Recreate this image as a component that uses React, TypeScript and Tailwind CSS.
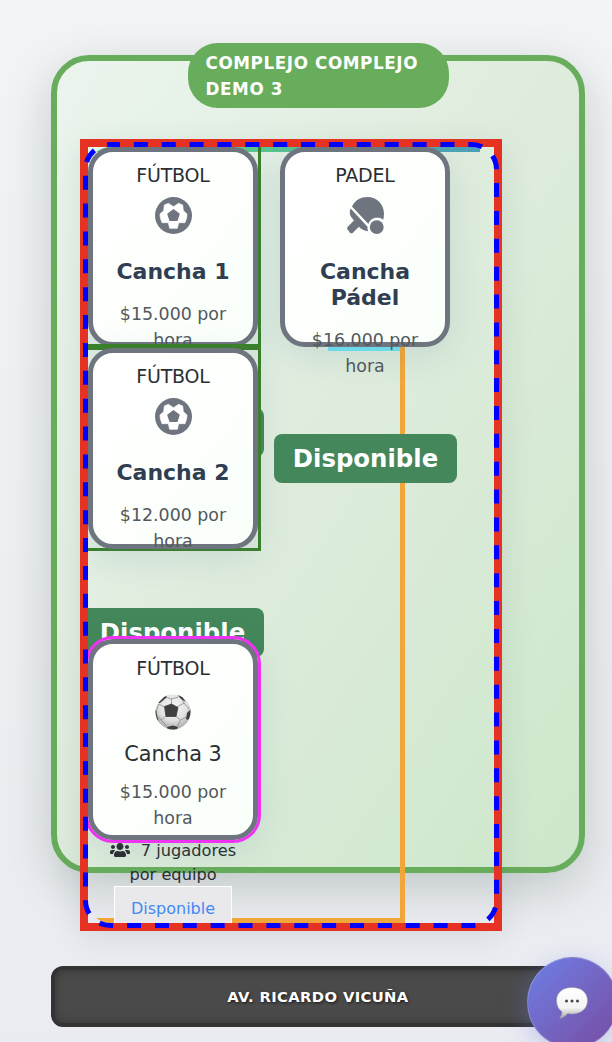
import React from "react";
import { FaUsers } from "react-icons/fa";

const cardClass =
  "relative box-border flex w-[170px] shrink-0 flex-col items-center rounded-[25px] border-[5px] border-[#6f757e] bg-gradient-to-br from-white to-[#fafffa] text-center shadow-[0_8px_34px_rgba(70,120,150,0.16)]";

function Badge({ className }: { className: string }) {
  return (
    <span
      className={`absolute flex h-[49px] w-[183px] items-center justify-center rounded-lg bg-[#43875a] pt-0.5 text-[24.4px] font-bold text-white ${className}`}
    >
      Disponible
    </span>
  );
}

interface CourtProps {
  sport: string;
  icon: React.ReactNode;
  name: string;
  price: string;
  className: string;
}

function Court({ sport, icon, name, price, className }: CourtProps) {
  return (
    <article className={`${cardClass} ${className}`}>
      <p className="mt-[10px] text-[19px] leading-[26px] tracking-[-0.2px] text-[#2b2e32]">{sport}</p>
      <div className="mt-[9px] h-[37px] text-[#6f757e]">{icon}</div>
      <h3 className="mt-[25px] w-[140px] text-[22px] font-bold leading-[26px] text-[#2f3e50]">{name}</h3>
      <p className="mt-4 w-[120px] text-[17.4px] leading-[26px] text-[#53585d]">{price}</p>
    </article>
  );
}

function FutbolIcon() {
  return (
    <svg viewBox="0 0 111 111" className="h-[37px] w-[37px]">
      <circle cx="55.5" cy="55.5" r="55.5" fill="currentColor" />
      <path
        d="M28 24L40 19L55.500 29L71 19L83 24L85 41L96 51L95 62L90 77L71 77L67 94L44 94L40 77L21 77L16 62L15 51L26 41z"
        fill="#fff"
        stroke="#fff"
        strokeWidth="2"
        strokeLinejoin="round"
      />
      <path d="M55.500 36L74.500 50L67.500 72H43.500L36.500 50z" fill="currentColor" />
    </svg>
  );
}

function PaddleIcon() {
  return (
    <svg viewBox="0 0 112 112" className="h-[37px] w-[37px]" fill="currentColor">
      <path d="M15 29C25 8 42 0 62 0C90 0 112 22 112 50C112 57 111 63 110 69C104 64 98 63 90 63C78 63 68 71 65 82Z" />
      <path d="M11 35C6 47 8 57 17 66L21 71L2 90Q-1 95 2 99L9 108Q13 112 18 108L36 90C43 97 52 103 64 104C62 98 62 95 62 90Z" />
      <circle cx="90" cy="91" r="21" />
    </svg>
  );
}

function SoccerBall() {
  return (
    <svg viewBox="0 0 36 36" className="h-9 w-9">
      <defs>
        <radialGradient id="ball" cx="50%" cy="35%" r="65%">
          <stop offset="0" stopColor="#f6f6f6" />
          <stop offset="0.6" stopColor="#e2e2e2" />
          <stop offset="1" stopColor="#a8a8a8" />
        </radialGradient>
        <clipPath id="ballClip">
          <circle cx="18" cy="18" r="17.5" />
        </clipPath>
      </defs>
      <circle cx="18" cy="18" r="17.5" fill="url(#ball)" />
      <g clipPath="url(#ballClip)">
        <path
          d="M16.500 10V5M22 13l7-4M20.500 22l5 4M11 22l-5 4M9 13L4 10M16.500 5l-7-2M16.500 5l7-2M29 9l-3-6M29 9l5 6M25.500 26l6-3M25.500 26l-3 6M6 26l-4-5M6 26l6 6M4 10L1 17"
          stroke="#8b8b8b"
          strokeWidth="0.8"
          fill="none"
        />
        <path d="M9.500 12.500l7-2.500 6.500 3.500-2 9H11z" fill="#404040" stroke="#404040" strokeWidth="0.8" strokeLinejoin="round" />
        <path
          d="M22 0l5 2.500 4 5.500-5-3zM36 15l-4 4-1 6 2 1 4-5zM12 33l6-1.500 5 1.500-2 4h-8zM0 16l1.500 1 .5 5 2 5-4-3zM3 9l6-6 3-2-1 3-6 5z"
          fill="#404040"
        />
      </g>
    </svg>
  );
}

function ChatBubble() {
  return (
    <svg viewBox="0 0 32 32" className="h-8 w-8">
      <defs>
        <linearGradient id="bubble" x1="0" y1="0" x2="0" y2="1">
          <stop offset="0" stopColor="#ffffff" />
          <stop offset="0.65" stopColor="#f4f4f4" />
          <stop offset="1" stopColor="#aaaaaa" />
        </linearGradient>
      </defs>
      <path
        d="M16 .5C24.500.5 31.500 5 31.500 13.500S24.500 27 16 27c-1.500 0-3-.1-4.300-.4C9.500 29 7 31 3.500 31.500 5.300 29.500 6 27.500 6 24.800 2.500 22.300.5 18.500.5 13.500.5 5 7.500.5 16 .5z"
        fill="url(#bubble)"
        stroke="#9a9a9a"
        strokeWidth="0.5"
      />
      <circle cx="10.500" cy="14" r="1.500" fill="#454545" />
      <circle cx="16" cy="14" r="1.500" fill="#454545" />
      <circle cx="21.500" cy="14" r="1.500" fill="#454545" />
    </svg>
  );
}

export default function App() {
  return (
    <div className="relative h-[1042px] w-[612px] overflow-hidden bg-gradient-to-b from-[#f3f4f6] to-[#ebecf1] pl-[51px] pt-[55px] font-['DejaVu_Sans',sans-serif]">
      <section className="relative box-border h-[818px] w-[534px] rounded-[38px] border-[6px] border-[#68ad5c] bg-gradient-to-br from-[#ebf5ee] via-[#deecdc] to-[#cde7cb] pl-[23px] pt-[78px] shadow-[0_15px_50px_rgba(45,80,60,0.24)]">
        <h2 className="absolute left-[130.5px] top-[-18px] flex h-[65px] w-[261px] items-center rounded-[30px] bg-[#68ad5c] pl-[18px] text-[16.8px] font-bold leading-[26px] tracking-[0.6px] text-white">
          COMPLEJO COMPLEJO DEMO 3
        </h2>

        <div className="relative box-border h-[792px] w-[422px] border-8 border-[#e63223] shadow-[0_8px_30px_rgba(50,80,80,0.12)]">
          <div className="relative flex h-[776px] w-[406px] items-start gap-[22px] overflow-hidden rounded-[22px]">
            <div className="absolute left-0 top-0 h-[5px] w-[392px] bg-gradient-to-r from-[#5cc88c] from-40% to-[#4b9fb9]" />
            <div className="absolute left-[240px] top-[200px] h-[3.5px] w-[76px] bg-[#72e4f2]" />
            <div className="absolute -left-2 top-[200px] h-[576px] w-[325px] border-b-[5px] border-r-[5px] border-[#f2a63a]" />

            <div className="relative flex w-[170px] flex-col">
              <Badge className="left-[-7px] top-[261px]" />
              <Badge className="left-[-7px] top-[461px]" />
              <div className="absolute -left-1 -top-1 h-[204px] w-[177px] border-[3px] border-[#3b8128]" />
              <Court sport="FÚTBOL" icon={<FutbolIcon />} name="Cancha 1" price="$15.000 por hora" className="h-[200px]" />
              <div className="absolute -left-1 top-[197px] h-[207px] w-[177px] border-[3px] border-t-[6px] border-[#3b8128]" />
              <Court sport="FÚTBOL" icon={<FutbolIcon />} name="Cancha 2" price="$12.000 por hora" className="mt-px h-[201px]" />
              <article className={`${cardClass} mt-[90px] h-[201px] outline-[3px] outline-[#f032f5]`}>
                <p className="mt-[11px] text-[19px] leading-[26px] tracking-[-0.2px] text-[#2b2e32]">FÚTBOL</p>
                <div className="mt-[13px]">
                  <SoccerBall />
                </div>
                <h3 className="mt-[11px] text-[20.8px] leading-[26px] text-[#2b2e32]">Cancha 3</h3>
                <p className="mt-3 w-[120px] text-[17.4px] leading-[26px] text-[#53585d]">$15.000 por hora</p>
              </article>
              <div className="-mt-px flex flex-col items-center text-center text-[16.2px] leading-6 text-[#2b2e32]">
                <p className="flex items-center gap-[11px]">
                  <FaUsers className="-mt-0.5 text-[20px]" />7 jugadores
                </p>
                <p>por equipo</p>
                <span className="-mt-px flex h-[46px] w-[118px] items-center justify-center border border-white bg-[#e9e9ec] text-base text-[#428af5]">
                  Disponible
                </span>
              </div>
            </div>

            <div className="relative w-[170px]">
              <Badge className="left-[-6px] top-[287px]" />
              <Court sport="PADEL" icon={<PaddleIcon />} name="Cancha Pádel" price="$16.000 por hora" className="h-[200px]" />
            </div>
          </div>
          <svg viewBox="0 0 422 792" className="pointer-events-none absolute -left-2 -top-2 h-[792px] w-[422px]">
            <rect x="5.5" y="5.5" width="411" height="781" rx="25" fill="none" stroke="#0000ff" strokeWidth="5" strokeDasharray="14 13.87" strokeDashoffset="4.5" />
          </svg>
        </div>
      </section>

      <footer className="mt-[93px] flex h-[61px] w-[534px] items-center justify-center rounded-xl border-4 border-[#333] bg-[#4a4a4a] pt-0.5 text-[14.8px] font-bold tracking-[0.35px] text-white shadow-[inset_0_0_10px_rgba(0,0,0,0.3)] [text-shadow:1px_1px_3px_rgba(0,0,0,0.7)]">
        AV. RICARDO VICUÑA
      </footer>

      <button className="absolute left-[526.5px] top-[957px] flex h-[91px] w-[91px] items-center justify-center rounded-full border border-white/20 bg-gradient-to-br from-[#6b7fe6] to-[#764ba2] shadow-[0_6px_26px_rgba(102,126,234,0.35)]">
        <ChatBubble />
      </button>
    </div>
  );
}
